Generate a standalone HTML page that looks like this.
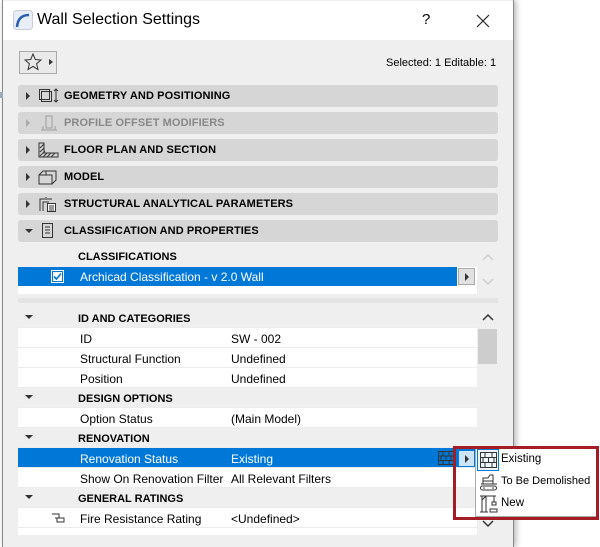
<!DOCTYPE html>
<html><head><style>
*{margin:0;padding:0;box-sizing:border-box}
body{width:600px;height:547px;overflow:hidden;background:#fff;font-family:"Liberation Sans",sans-serif;position:relative;font-size:12px;color:#000}
.a{position:absolute}
.dlg{left:2px;top:0;width:512px;height:547px;background:#efefef;border-left:1px solid #888;border-right:1px solid #888;box-shadow:2px 0 6px rgba(0,0,0,.3)}
.title{left:3px;top:1px;width:510px;height:39px;background:#fff}
.bar{left:18px;width:480px;height:22px;background:#d6d6d6;border-radius:3px}
.bar b{position:absolute;left:46px;top:5px;font-size:11px;font-weight:bold;letter-spacing:.1px}
.tri{position:absolute;left:8px;top:7px;width:0;height:0;border-left:4px solid #333;border-top:4px solid transparent;border-bottom:4px solid transparent}
.trid{position:absolute;left:7px;top:9px;width:0;height:0;border-top:4px solid #333;border-left:4px solid transparent;border-right:4px solid transparent}
.row{left:18px;width:459px;height:20px;background:#fff;border-bottom:1px solid #ececec}
.row .l{position:absolute;left:62px;top:4px}
.row .v{position:absolute;left:213px;top:4px}
.hd{background:#efefef}
.hd .l{left:60px;font-weight:bold;font-size:11px;top:5px}
.sel{background:#0078d7;color:#fff}
.ic{position:absolute;left:20px;top:3px}
</style></head><body>
<div class="a dlg"></div>
<div class="a title"></div>
<svg class="a" style="left:13px;top:10px" width="20" height="20"><rect x="0.5" y="0.5" width="19" height="19" rx="3" fill="#e8eef8" stroke="#ccd"/><path d="M4 17 Q5 5 16 5" stroke="#2a5db0" stroke-width="2.5" fill="none"/></svg>
<div class="a" style="left:37px;top:11px;font-size:16px">Wall Selection Settings</div>
<div class="a" style="left:422px;top:11px;font-size:15px">?</div>
<svg class="a" style="left:476px;top:14px" width="14" height="14"><path d="M1 1L13 13M13 1L1 13" stroke="#222" stroke-width="1.2"/></svg>
<div class="a" style="left:19px;top:51px;width:38px;height:23px;border:1px solid #aaa;background:#e9e9e9"></div>
<svg class="a" style="left:24px;top:53px" width="32" height="18"><path d="M9 1 L11.3 6.5 L17 7 L12.6 10.7 L14 16.5 L9 13.4 L4 16.5 L5.4 10.7 L1 7 L6.7 6.5Z" fill="none" stroke="#333"/><path d="M25 6 L29 9 L25 12Z" fill="#333"/></svg>
<div class="a" style="left:386px;top:57px;font-size:11px">Selected: 1 Editable: 1</div>
<div class="a" style="left:0;top:92px;width:3px;height:6px;background:#9ab"></div>

<div class="a bar" style="top:85px"><i class="tri"></i><svg class="a" style="left:20px;top:3px" width="22" height="16"><rect x="1.5" y="1.5" width="10" height="10" fill="none" stroke="#333"/><rect x="3.5" y="3.5" width="10" height="10" fill="none" stroke="#333"/><path d="M18 1V14M16 3L18 1L20 3M16 12L18 14L20 12" stroke="#333" fill="none"/></svg><b>GEOMETRY AND POSITIONING</b></div>
<div class="a bar" style="top:112px;color:#888"><i class="tri" style="border-left-color:#aaa"></i><svg class="a" style="left:20px;top:3px" width="22" height="16" opacity=".5"><rect x="8" y="1" width="6" height="12" fill="none" stroke="#666"/><path d="M3 15H19M5 15V11M17 15V11" stroke="#666"/></svg><b>PROFILE OFFSET MODIFIERS</b></div>
<div class="a bar" style="top:139px"><i class="tri"></i><svg class="a" style="left:20px;top:3px" width="22" height="16"><path d="M1 1V15H20V11H6V1Z" fill="none" stroke="#333"/><path d="M2 6L6 2M2 10L6 6M2 14L7 9M5 15L9 11M9 15L13 11M13 15L17 11" stroke="#333"/></svg><b>FLOOR PLAN AND SECTION</b></div>
<div class="a bar" style="top:166px"><i class="tri"></i><svg class="a" style="left:20px;top:3px" width="22" height="16"><path d="M1 6H14V15H1ZM1 6L5 2H18V11L14 15M8 2V6" fill="none" stroke="#333"/></svg><b>MODEL</b></div>
<div class="a bar" style="top:193px"><i class="tri"></i><svg class="a" style="left:20px;top:3px" width="22" height="16"><path d="M2 15V3H14M5 15V6H11M8 2V1" fill="none" stroke="#333"/><rect x="9.5" y="7.5" width="8" height="8" fill="#fff" stroke="#333"/><path d="M11 10H16M11 12H16M11 14H16" stroke="#333"/></svg><b>STRUCTURAL ANALYTICAL PARAMETERS</b></div>
<div class="a bar" style="top:220px"><i class="trid"></i><svg class="a" style="left:20px;top:2px" width="22" height="17"><rect x="4.5" y="1.5" width="10" height="14" fill="none" stroke="#333"/><path d="M7 5H12M7 8H12M7 11H12" stroke="#333"/></svg><b>CLASSIFICATION AND PROPERTIES</b></div>

<div class="a" style="left:18px;top:247px;width:459px;height:47px;background:#fff"></div>
<div class="a" style="left:18px;top:247px;width:459px;height:20px;background:#efefef"></div>
<div class="a" style="left:78px;top:251px;font-size:11px;font-weight:bold">CLASSIFICATIONS</div>
<div class="a sel" style="left:18px;top:267px;width:439px;height:19px"></div>
<svg class="a" style="left:51px;top:270px" width="13" height="13"><rect x=".5" y=".5" width="12" height="12" fill="#fff" stroke="#fff"/><rect x="1" y="1" width="11" height="11" fill="#0078d7"/><rect x="2" y="2" width="9" height="9" fill="#fff"/><path d="M3 6.5L5.5 9L10 3.5" stroke="#0078d7" stroke-width="1.6" fill="none"/></svg>
<div class="a" style="left:80px;top:270px;color:#fff">Archicad Classification - v 2.0 Wall</div>
<div class="a" style="left:458px;top:268px;width:17px;height:17px;background:#e1e1e1;border:1px solid #aaa"></div>
<div class="a" style="left:465px;top:273px;border-left:4px solid #333;border-top:4px solid transparent;border-bottom:4px solid transparent"></div>
<svg class="a" style="left:481px;top:252px" width="14" height="36"><path d="M2 8L7 3L12 8M2 27L7 32L12 27" stroke="#ccc" stroke-width="1.3" fill="none"/></svg>
<div class="a" style="left:18px;top:298px;width:480px;height:5px;background:#e4e4e4"></div>

<div class="a" style="left:18px;top:308px;width:459px;height:227px;background:#fff"></div>
<div class="a row hd" style="top:308px"><i class="trid" style="left:7px;top:7px"></i><span class="l">ID AND CATEGORIES</span></div>
<div class="a row" style="top:328px"><span class="l">ID</span><span class="v">SW - 002</span></div>
<div class="a row" style="top:348px"><span class="l">Structural Function</span><span class="v">Undefined</span></div>
<div class="a row" style="top:368px"><span class="l">Position</span><span class="v">Undefined</span></div>
<div class="a row hd" style="top:388px"><i class="trid" style="left:7px;top:7px"></i><span class="l">DESIGN OPTIONS</span></div>
<div class="a row" style="top:408px"><span class="l">Option Status</span><span class="v">(Main Model)</span></div>
<div class="a row hd" style="top:428px"><i class="trid" style="left:7px;top:7px"></i><span class="l">RENOVATION</span></div>
<div class="a row sel" style="top:448px"><span class="l">Renovation Status</span><span class="v">Existing</span>
<svg class="a" style="left:420px;top:3px" width="16" height="14"><path d="M.5 .5H15.5V13.5H.5ZM.5 5H15.5M.5 9.5H15.5M5 .5V5M11 .5V5M8 5V9.5M3 5V9.5M13 5V9.5M5 9.5V13.5M11 9.5V13.5" stroke="#333" fill="none"/></svg></div>
<div class="a row" style="top:468px"><span class="l">Show On Renovation Filter</span><span class="v">All Relevant Filters</span></div>
<div class="a row hd" style="top:488px"><i class="trid" style="left:7px;top:7px"></i><span class="l">GENERAL RATINGS</span></div>
<div class="a row" style="top:508px"><svg class="ic" style="left:33px;top:5px" width="14" height="10"><path d="M1 1H8V5H4M6 5H13V9H6V5" stroke="#333" fill="none"/></svg><span class="l">Fire Resistance Rating</span><span class="v">&lt;Undefined&gt;</span></div>
<div class="a" style="left:18px;top:535px;width:480px;height:12px;background:#efefef"></div>
<div class="a" style="left:478px;top:308px;width:20px;height:227px;background:#efefef"></div>
<div class="a" style="left:478px;top:329px;width:19px;height:35px;background:#cdcdcd"></div>
<svg class="a" style="left:481px;top:313px" width="14" height="10"><path d="M2 7L7 2L12 7" stroke="#333" stroke-width="1.5" fill="none"/></svg>
<svg class="a" style="left:481px;top:519px" width="14" height="10"><path d="M2 2L7 7L12 2" stroke="#333" stroke-width="1.5" fill="none"/></svg>

<div class="a" style="left:458px;top:450px;width:17px;height:17px;background:#cce4f7;border:1px solid #0078d7"></div>
<div class="a" style="left:465px;top:455px;border-left:4px solid #333;border-top:4px solid transparent;border-bottom:4px solid transparent"></div>
<div class="a" style="left:475px;top:447px;width:123px;height:70px;background:#fff;border:1px solid #aaa"></div>
<div class="a" style="left:477px;top:449px;width:22px;height:22px;border:1px solid #0078d7;background:#eef6fd"></div>
<svg class="a" style="left:480px;top:452px" width="17" height="16"><path d="M.5 .5H16.5V15.5H.5ZM.5 5.5H16.5M.5 10.5H16.5M5 .5V5.5M12 .5V5.5M8.5 5.5V10.5M3 5.5V10.5M14 5.5V10.5M5 10.5V15.5M12 10.5V15.5" stroke="#333" fill="none"/></svg>
<svg class="a" style="left:479px;top:473px" width="20" height="18"><path d="M4 11V5H9L11 2H14V11M2 11H18M4 11V8H14" stroke="#333" fill="none"/><rect x="1.5" y="13" width="16" height="4" rx="2" fill="none" stroke="#333"/><circle cx="5" cy="15" r=".8" fill="#333"/><circle cx="14" cy="15" r=".8" fill="#333"/></svg>
<svg class="a" style="left:479px;top:494px" width="20" height="20"><path d="M1 2H17M3 2V18M7 2V18M1 18H9M3 6L7 2M15 2V8M13 8H17V11H13ZM11 15H18V18H11Z" stroke="#333" fill="none"/></svg>
<div class="a" style="left:501px;top:453px;font-size:11.5px">Existing</div>
<div class="a" style="left:501px;top:475px;font-size:11px">To Be Demolished</div>
<div class="a" style="left:501px;top:497px;font-size:11.5px">New</div>
<div class="a" style="left:453px;top:446px;width:146px;height:74px;border:3px solid #a51d24"></div>
</body></html>
